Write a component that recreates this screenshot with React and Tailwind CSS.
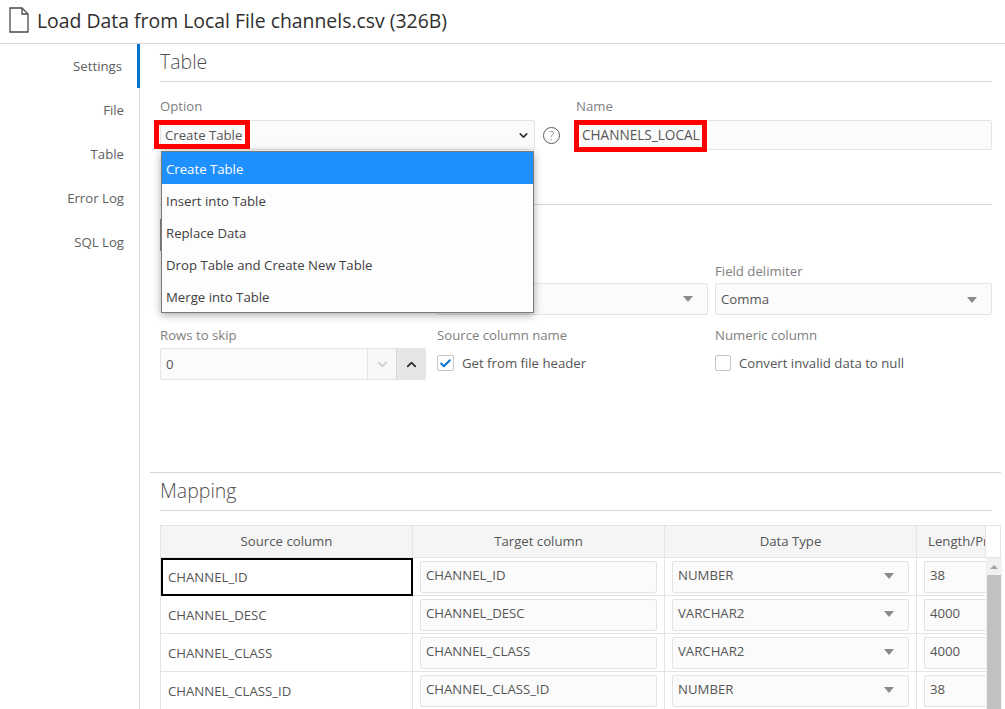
import React from 'react'
import { ChevronDown, ChevronUp, Check } from 'lucide-react'

const navItems = ['Settings', 'File', 'Table', 'Error Log', 'SQL Log']
const menuItems = ['Insert into Table', 'Replace Data', 'Drop Table and Create New Table', 'Merge into Table']
const rows = [
  ['CHANNEL_ID', 'NUMBER', '38'],
  ['CHANNEL_DESC', 'VARCHAR2', '4000'],
  ['CHANNEL_CLASS', 'VARCHAR2', '4000'],
  ['CHANNEL_CLASS_ID', 'NUMBER', '38'],
]

const Caret = () => (
  <svg width="10" height="6" viewBox="0 0 10 6" className="shrink-0">
    <path d="M0 0h10L5 6z" fill="#8a8a8a" />
  </svg>
)

const SelectBox = ({ value, className = '' }) => (
  <div className={`flex items-center justify-between rounded-[2px] border border-[#e4e4e4] bg-[#fbfbfb] pl-[5px] pr-[14px] text-[#555] ${className}`}>
    <span>{value}</span>
    <Caret />
  </div>
)

const FormLabel = ({ children, className = 'mb-[4px]' }) => (
  <div className={`h-[18px] text-[13.2px] leading-[18px] text-[#808080] ${className}`}>{children}</div>
)

const SectionTitle = ({ children }) => (
  <h2 className="h-[38px] border-b border-[#d6d6d6] text-[19.5px] font-light leading-[36px] text-[#505050]">{children}</h2>
)

const App = () => {
  return (
    <div className="relative flex h-[709px] w-[1005px] flex-col overflow-hidden bg-white font-['Open_Sans','Noto_Sans',sans-serif] text-[13.2px] text-[#555]">
      <header className="flex h-[44px] shrink-0 items-center border-b border-[#d6d6d6] pb-[1px] pl-[9px]">
        <svg width="20" height="26" viewBox="0 0 20 26" fill="none" stroke="#4a4a4a" strokeWidth="1.3" className="mb-[3px]">
          <path d="M1 1h12l6 6v18H1z" />
          <path d="M13 1v6h6" />
        </svg>
        <h1 className="ml-[8px] text-[19.4px] font-medium leading-none text-[#2f2f2f]">Load Data from Local File channels.csv (326B)</h1>
      </header>

      <div className="flex min-h-0 flex-1">
        <nav className="w-[140px] shrink-0 border-r border-[#d6d6d6]">
          {navItems.map((item, i) => (
            <div
              key={item}
              className={`flex h-[44px] items-center justify-end pr-[15px] pt-[1px] text-[#606060] ${i === 0 ? '-mr-[1px] border-r-[3px] border-[#0572ce]' : ''}`}
            >
              {item}
            </div>
          ))}
        </nav>

        <main className="relative min-w-0 flex-1">
          {/* Table section */}
          <div className="ml-[10px] mr-[4px] h-[429px] border-b border-[#d6d6d6] pl-[10px] pr-[9px]">
            <SectionTitle>Table</SectionTitle>
            <div className="mt-[15px] flex">
              <div className="w-[375px]">
                <FormLabel className="mb-[5px]">Option</FormLabel>
                <div className="flex h-[30px] items-center justify-between rounded-[2px] border border-[#e4e4e4] bg-[#fbfbfb] pl-[4px] pr-[4px] pt-[1px]">
                  <span>Create Table</span>
                  <ChevronDown size={13} strokeWidth={3} className="text-[#303030]" />
                </div>
              </div>
              <div className="flex w-[41px] items-end pb-[6px] pl-[8px]">
                <div className="flex h-[17px] w-[17px] items-center justify-center rounded-full border border-[#5a5a5a] text-[12px] font-light leading-none text-[#5a5a5a]">?</div>
              </div>
              <div className="flex-1">
                <FormLabel className="mb-[5px]">Name</FormLabel>
                <div className="flex h-[30px] items-center rounded-[2px] border border-[#e4e4e4] bg-[#fbfbfb] pl-[5px] text-[13.6px]">CHANNELS_LOCAL</div>
              </div>
            </div>

            <div className="mt-[54px] border-t border-[#d6d6d6]" />

            <div className="mt-[14px] h-[32px] w-[2px] bg-[#8a8a8a]" />

            <div className="mt-[11px] grid grid-cols-[277px_278px_277px]">
              <div className="h-[53px]" />
              <div className="w-[271px]">
                <FormLabel className="mb-[3px]">&nbsp;</FormLabel>
                <SelectBox value="" className="h-[32px]" />
              </div>
              <div>
                <FormLabel className="mb-[3px]">Field delimiter</FormLabel>
                <SelectBox value="Comma" className="h-[32px] pt-[1px]" />
              </div>

              <div className="mt-[11px] w-[266px]">
                <FormLabel>Rows to skip</FormLabel>
                <div className="flex h-[32px] rounded-[2px] border border-[#e4e4e4] bg-[#fbfbfb]">
                  <div className="flex flex-1 items-center pl-[5px] pt-[1px]">0</div>
                  <div className="flex w-[29px] items-center justify-center border-l border-[#e4e4e4] bg-[#f8f8f8]">
                    <ChevronDown size={15} strokeWidth={3} className="text-[#cfcfcf]" />
                  </div>
                  <div className="flex w-[29px] items-center justify-center border-l border-[#d6d6d6] bg-[#e4e6e8]">
                    <ChevronUp size={15} strokeWidth={3} className="text-[#303030]" />
                  </div>
                </div>
              </div>
              <div className="mt-[11px]">
                <FormLabel>Source column name</FormLabel>
                <div className="flex h-[30px] items-center gap-[8px]">
                  <div className="flex h-[16px] w-[17px] items-center justify-center rounded-[2px] border border-[#c4c4c4] bg-white">
                    <Check size={13} strokeWidth={3.5} className="text-[#0572ce]" />
                  </div>
                  <span className="pt-[1px]">Get from file header</span>
                </div>
              </div>
              <div className="mt-[11px]">
                <FormLabel>Numeric column</FormLabel>
                <div className="flex h-[30px] items-center gap-[8px]">
                  <div className="h-[16px] w-[16px] rounded-[2px] border border-[#c4c4c4] bg-white" />
                  <span className="pt-[1px]">Convert invalid data to null</span>
                </div>
              </div>
            </div>
          </div>

          {/* Mapping section */}
          <div className="ml-[20px] mr-[13px]">
            <SectionTitle>Mapping</SectionTitle>
          </div>
          <div className="ml-[20px] mr-[4px] mt-[14px] grid grid-cols-[252px_252px_252px_69px_16px] border-l border-r border-t border-[#e4e4e4]">
            {['Source column', 'Target column', 'Data Type'].map((h) => (
              <div key={h} className="flex h-[32px] items-center justify-center border-b border-r border-[#e4e4e4] bg-[#f5f5f5]">{h}</div>
            ))}
            <div className="flex h-[32px] items-center overflow-hidden whitespace-nowrap border-b border-r border-[#e4e4e4] bg-[#f5f5f5] pl-[11px]">Length/Precision</div>
            <div className="h-[32px] border-b border-[#e4e4e4]" />

            {rows.map(([name, type, size], i) => (
              <React.Fragment key={name}>
                <div className={`flex h-[38px] items-center ${i === 0 ? 'border-2 border-black pl-[5px]' : 'border-b border-r border-[#e4e4e4] pl-[7px]'}`}>
                  <span className="pt-[2px]">{name}</span>
                </div>
                <div className="flex h-[38px] items-center border-b border-r border-[#e4e4e4] px-[7px]">
                  <div className="flex h-[32px] w-full items-center rounded-[2px] border border-[#e4e4e4] bg-[#fbfbfb] pb-[2px] pl-[5px]">{name}</div>
                </div>
                <div className="flex h-[38px] items-center border-b border-r border-[#e4e4e4] px-[7px]">
                  <SelectBox value={type} className="h-[32px] w-full pb-[1px]" />
                </div>
                <div className="flex h-[38px] items-center border-b border-[#e4e4e4] pl-[7px]">
                  <div className="flex h-[32px] w-full items-center rounded-l-[2px] border border-r-0 border-[#e4e4e4] bg-[#fbfbfb] pb-[1px] pl-[5px]">{size}</div>
                </div>
                <div className="flex h-[38px] flex-col bg-[#f1f1f1]">
                  {i === 0 && (
                    <div className="flex h-[17px] items-center justify-center">
                      <svg width="8" height="4" viewBox="0 0 8 4"><path d="M0 4h8L4 0z" fill="#a3a3a3" /></svg>
                    </div>
                  )}
                  <div className="mx-[1px] flex-1 bg-[#c1c1c1]" />
                </div>
              </React.Fragment>
            ))}
          </div>

          {/* open dropdown list */}
          <div className="absolute left-[21px] top-[107px] w-[373px] border border-[#7a7a7a] bg-[#fdfdfd] shadow-[0_2px_8px_rgba(0,0,0,0.35)]">
            <div className="flex h-[32px] items-center bg-[#1e90ff] pl-[4px] pt-[3px] text-white">Create Table</div>
            {menuItems.map((item) => (
              <div key={item} className="flex h-[32px] items-center pl-[4px] pt-[3px] text-[#404040]">{item}</div>
            ))}
          </div>

          {/* red annotation boxes */}
          <div className="pointer-events-none absolute left-[14px] top-[76px] h-[29px] w-[96px] border-[5px] border-[#ff0000]" />
          <div className="pointer-events-none absolute left-[434px] top-[76px] h-[32px] w-[133px] border-[5px] border-[#ff0000]" />
        </main>
      </div>
    </div>
  )
}

export default App
